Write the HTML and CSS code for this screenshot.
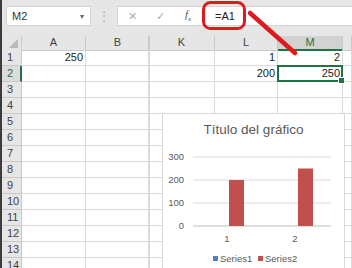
FILE: index.html
```html
<!DOCTYPE html>
<html lang="es">
<head>
    <meta charset="UTF-8">
    <title>Hoja de cálculo</title>
    <link rel="stylesheet" href="styles.css">
</head>
<body>

<div class="app">
    <div class="topbar">
        <div class="namebox"><span>M2</span><span class="caret">&#9662;</span></div>
        <div class="grip">&#8942;</div>
        <div class="formula">
            <span class="ic">&#10005;</span>
            <span class="ic">&#10003;</span>
            <span class="fx">f<sub>x</sub></span>
            <span class="ftext">=A1</span>
        </div>
    </div>

    <div class="sheet">
        <div class="row head">
            <div class="cell corner"><span class="tri"></span></div>
            <div class="cell">A</div>
            <div class="cell">B</div>
            <div class="cell hidden-split">K</div>
            <div class="cell">L</div>
            <div class="cell active">M</div>
            <div class="cell"></div>
        </div>
        <div class="row">
            <div class="cell num">1</div>
            <div class="cell val">250</div>
            <div class="cell"></div>
            <div class="cell hidden-split"></div>
            <div class="cell val">1</div>
            <div class="cell val">2</div>
            <div class="cell"></div>
        </div>
        <div class="row">
            <div class="cell num active">2</div>
            <div class="cell"></div>
            <div class="cell"></div>
            <div class="cell hidden-split"></div>
            <div class="cell val">200</div>
            <div class="cell val sel">250</div>
            <div class="cell"></div>
        </div>
        <div class="row"><div class="cell num">3</div><div class="cell"></div><div class="cell"></div><div class="cell hidden-split"></div><div class="cell"></div><div class="cell"></div><div class="cell"></div></div>
        <div class="row"><div class="cell num">4</div><div class="cell"></div><div class="cell"></div><div class="cell hidden-split"></div><div class="cell"></div><div class="cell"></div><div class="cell"></div></div>
        <div class="row"><div class="cell num">5</div><div class="cell"></div><div class="cell"></div><div class="cell hidden-split"></div><div class="cell"></div><div class="cell"></div><div class="cell"></div></div>
        <div class="row"><div class="cell num">6</div><div class="cell"></div><div class="cell"></div><div class="cell hidden-split"></div><div class="cell"></div><div class="cell"></div><div class="cell"></div></div>
        <div class="row"><div class="cell num">7</div><div class="cell"></div><div class="cell"></div><div class="cell hidden-split"></div><div class="cell"></div><div class="cell"></div><div class="cell"></div></div>
        <div class="row"><div class="cell num">8</div><div class="cell"></div><div class="cell"></div><div class="cell hidden-split"></div><div class="cell"></div><div class="cell"></div><div class="cell"></div></div>
        <div class="row"><div class="cell num">9</div><div class="cell"></div><div class="cell"></div><div class="cell hidden-split"></div><div class="cell"></div><div class="cell"></div><div class="cell"></div></div>
        <div class="row"><div class="cell num">10</div><div class="cell"></div><div class="cell"></div><div class="cell hidden-split"></div><div class="cell"></div><div class="cell"></div><div class="cell"></div></div>
        <div class="row"><div class="cell num">11</div><div class="cell"></div><div class="cell"></div><div class="cell hidden-split"></div><div class="cell"></div><div class="cell"></div><div class="cell"></div></div>
        <div class="row"><div class="cell num">12</div><div class="cell"></div><div class="cell"></div><div class="cell hidden-split"></div><div class="cell"></div><div class="cell"></div><div class="cell"></div></div>
        <div class="row"><div class="cell num">13</div><div class="cell"></div><div class="cell"></div><div class="cell hidden-split"></div><div class="cell"></div><div class="cell"></div><div class="cell"></div></div>
        <div class="row"><div class="cell num">14</div><div class="cell"></div><div class="cell"></div><div class="cell hidden-split"></div><div class="cell"></div><div class="cell"></div><div class="cell"></div></div>
    </div>

    <!-- chart floats over the cells -->
    <div class="chart">
        <div class="chart-title">Título del gráfico</div>
        <svg class="plot" width="180" height="130" viewBox="0 32 180 130">
            <g class="grid">
                <line x1="30" y1="43" x2="168" y2="43"/>
                <line x1="30" y1="66" x2="168" y2="66"/>
                <line x1="30" y1="89" x2="168" y2="89"/>
            </g>
            <line class="axis" x1="30" y1="112" x2="168" y2="112"/>
            <g class="ticks">
                <text x="21" y="46">300</text>
                <text x="21" y="69">200</text>
                <text x="21" y="92">100</text>
                <text x="21" y="115">0</text>
            </g>
            <rect class="bar" x="66" y="66" width="15" height="46"/>
            <rect class="bar" x="135" y="54.5" width="15" height="57.5"/>
            <g class="cats">
                <text x="64" y="128">1</text>
                <text x="132" y="128">2</text>
            </g>
            <g class="legend">
                <rect x="50" y="142" width="5" height="5" fill="#4f81bd"/>
                <text x="57" y="148">Series1</text>
                <rect x="95" y="142" width="5" height="5" fill="#c0504d"/>
                <text x="102" y="148">Series2</text>
            </g>
        </svg>
    </div>

    <svg class="markup" width="352" height="268">
        <rect x="203.5" y="2.5" width="41" height="26" rx="7"/>
        <line x1="250" y1="13" x2="295" y2="53"/>
    </svg>
</div>

</body>
</html>
```

FILE: styles.css
```css
body { margin: 0; background: #fff; font-family: "Liberation Sans", Arial, sans-serif; overflow: hidden; }

.app {
  position: relative;
  width: 352px;
  height: 268px;
  overflow: hidden;
  border-left: 2px solid #3c3c3c;
  box-sizing: border-box;
}

/* formula bar */
.topbar {
  height: 36px;
  background: #e6e6e6;
  display: flex;
  align-items: flex-start;
  padding-top: 6px;
  box-sizing: border-box;
}
.namebox {
  margin-left: 4px;
  width: 85px;
  height: 20px;
  background: #fff;
  border: 1px solid #d4d4d4;
  box-sizing: border-box;
  display: flex;
  align-items: center;
  justify-content: space-between;
  padding: 0 6px 0 5px;
  font-size: 11px;
  color: #333;
}
.caret { font-size: 8px; color: #666; }
.grip {
  width: 26px;
  text-align: center;
  color: #b5b5b5;
  font-size: 12px;
  line-height: 20px;
}
.formula {
  flex: 1;
  height: 20px;
  background: #fff;
  border: 1px solid #d4d4d4;
  border-right: none;
  box-sizing: border-box;
  display: flex;
  align-items: center;
  font-size: 11px;
}
.ic { width: 28px; text-align: center; color: #b0b0b0; font-size: 11px; }
.fx {
  width: 28px;
  text-align: center;
  font-family: "Liberation Serif", serif;
  font-style: italic;
  color: #555;
  font-size: 11px;
}
.fx sub { font-size: 7px; }
.ftext { margin-left: 13px; color: #222; }

/* grid */
.row {
  display: grid;
  grid-template-columns: 20px 64px 64px 65px 63px 65px 1fr;
  height: 16px;
}
.cell {
  border-right: 1px solid #dadada;
  border-bottom: 1px solid #dadada;
  box-sizing: border-box;
  font-size: 11px;
  line-height: 15px;
  color: #222;
  position: relative;
}
.val { text-align: right; padding-right: 2px; }
.hidden-split { border-left: 1px solid #dadada; margin-left: -2px; }

.row.head { height: 14px; background: #e6e6e6; }
.row.head .cell {
  text-align: center;
  color: #444;
  line-height: 13px;
  border-color: #c9c9c9;
}
.row.head .cell.active {
  background: #d2d2d2;
  color: #217346;
  border-bottom: 2px solid #217346;
}
.corner .tri {
  position: absolute;
  right: 3px;
  bottom: 2px;
  width: 0;
  height: 0;
  border-left: 9px solid transparent;
  border-bottom: 9px solid #b9b9b9;
}

.num {
  background: #e6e6e6;
  border-color: #c9c9c9;
  text-align: left;
  padding-left: 5px;
  color: #444;
}
.num.active {
  background: #dcdcdc;
  color: #217346;
  border-right: 2px solid #217346;
}

.sel::after {
  content: "";
  position: absolute;
  left: -1px;
  top: -1px;
  right: -1px;
  bottom: -1px;
  border: 2px solid #217346;
}
.sel::before {
  content: "";
  position: absolute;
  right: -3px;
  bottom: -3px;
  width: 5px;
  height: 5px;
  background: #217346;
  border: 1px solid #fff;
  z-index: 1;
}

/* chart */
.chart {
  position: absolute;
  left: 160px;
  top: 113px;
  width: 181px;
  height: 170px;
  background: #fff;
  border: 1px solid #d9d9d9;
}
.chart-title {
  height: 32px;
  line-height: 32px;
  text-align: center;
  color: #595959;
  font-size: 13.5px;
}
.plot { display: block; }
.grid line { stroke: #d9d9d9; stroke-width: 1; }
.axis { stroke: #bfbfbf; stroke-width: 1; }
.ticks text { font-size: 9.5px; fill: #595959; text-anchor: end; }
.cats text { font-size: 9.5px; fill: #595959; text-anchor: middle; }
.legend text { font-size: 9.5px; fill: #595959; }
.bar { fill: #c0504d; }

/* red annotation */
.markup {
  position: absolute;
  left: -2px;
  top: 0;
  pointer-events: none;
}
.markup rect { fill: none; stroke: #e0191f; stroke-width: 3; }
.markup line { stroke: #e0191f; stroke-width: 4.5; stroke-linecap: round; }
```
